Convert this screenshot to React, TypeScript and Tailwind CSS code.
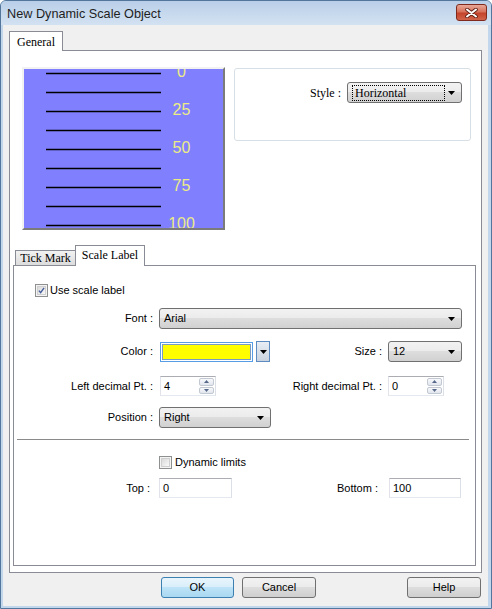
import React from 'react';

function DownArrow() {
    return (
        <svg width="7" height="4" viewBox="0 0 7 4">
            <path d="M0 0H7L3.5 4Z" fill="#000" />
        </svg>
    );
}

function Combo({ text, className, serif }: { text: string; className: string; serif?: boolean }) {
    return (
        <div
            className={`flex h-[21px] items-center justify-between rounded-[3px] border border-[#707070] bg-[linear-gradient(#f2f2f2_0%,#ebebeb_50%,#dddddd_50%,#d1d1d1_100%)] pr-[6px] pl-[4px] ${className}`}
        >
            {serif ? (
                <span className="flex h-[16px] w-[93px] items-center border border-dotted border-black pl-[2px] font-['Liberation_Serif',serif] text-[12px]">
                    {text}
                </span>
            ) : (
                <span className="text-[11px]">{text}</span>
            )}
            <DownArrow />
        </div>
    );
}

function SpinBtn({ up }: { up?: boolean }) {
    return (
        <div className="flex flex-1 items-center justify-center rounded-[2px] border border-[#c3c9d3] bg-[linear-gradient(#f8f9fb,#e1e6ee)]">
            <svg width="5" height="3" viewBox="0 0 5 3">
                <path d={up ? 'M0 3H5L2.5 0Z' : 'M0 0H5L2.5 3Z'} fill="#56698a" />
            </svg>
        </div>
    );
}

function Spin({ value, className }: { value: string; className: string }) {
    return (
        <div className={`flex h-[20px] border border-t-[#abadb3] border-r-[#dbdfe6] border-b-[#e3e9ef] border-l-[#e2e3ea] bg-white ${className}`}>
            <span className="flex flex-1 items-center pl-[3px] text-[11px]">{value}</span>
            <div className="flex w-[16px] flex-col gap-px py-px pr-px">
                <SpinBtn up />
                <SpinBtn />
            </div>
        </div>
    );
}

function TextBox({ value, className }: { value: string; className: string }) {
    return (
        <div
            className={`flex h-[20px] items-center border border-t-[#abadb3] border-r-[#dbdfe6] border-b-[#e3e9ef] border-l-[#e2e3ea] bg-white pl-[3px] text-[11px] ${className}`}
        >
            {value}
        </div>
    );
}

function Check({ checked }: { checked?: boolean }) {
    return (
        <div className="flex h-[13px] w-[13px] shrink-0 border border-[#8e8f8f] bg-[#f4f4f4] p-px">
            <div className="flex h-full w-full items-center justify-center border border-[#cfcfcf] bg-[linear-gradient(135deg,#d9d9d9,#f9f9f9)]">
                {checked && (
                    <svg width="9" height="9" viewBox="0 0 9 9">
                        <path d="M1.2 4.6L3.4 7.2L7.8 1" fill="none" stroke="#41599a" strokeWidth="1.7" />
                    </svg>
                )}
            </div>
        </div>
    );
}

function Label({ children, className }: { children: React.ReactNode; className: string }) {
    return <div className={`shrink-0 text-right text-[11px] ${className}`}>{children}</div>;
}

function Btn({ children, primary, className }: { children: React.ReactNode; primary?: boolean; className: string }) {
    return (
        <div
            className={`flex h-[21px] items-center justify-center rounded-[3px] border text-[11px] ${
                primary
                    ? 'border-[#3c7fb1] bg-[linear-gradient(#e9f5fc_0%,#d8eefa_50%,#bde3f7_50%,#a9d8f1_100%)]'
                    : 'border-[#707070] bg-[linear-gradient(#f2f2f2_0%,#ebebeb_50%,#dddddd_50%,#cfcfcf_100%)]'
            } ${className}`}
        >
            {children}
        </div>
    );
}

export default function App() {
    const ticks = [4.5, 23.5, 42.5, 61.5, 80.5, 99.5, 118.5, 137.5, 156.5];
    const labels = [
        { y: 8.25, t: '0' },
        { y: 46.25, t: '25' },
        { y: 84.25, t: '50' },
        { y: 122.25, t: '75' },
        { y: 160.25, t: '100' },
    ];

    return (
        <div className="flex h-[609px] w-[492px] flex-col overflow-hidden rounded-t-[6px] border border-[#52769c] bg-[#c2d6ec] font-['Liberation_Sans',Arial,sans-serif] text-black">
            {/* title bar */}
            <div className="flex h-[24px] shrink-0 items-start justify-between bg-[linear-gradient(#b9cfe8,#d3e2f2)] pt-[3px] pr-[4px] pl-[6px]">
                <span className="mt-[3px] text-[12.7px] leading-[14px] text-[#1e1e1e]">New Dynamic Scale Object</span>
                <div className="flex h-[17px] w-[31px] items-center justify-center rounded-[3px] border border-[#7f2a1c] bg-[linear-gradient(#e9a898_0%,#d7715c_45%,#c4442b_55%,#d0644a_100%)]">
                    <svg width="13" height="10" viewBox="0 0 13 10">
                        <path d="M2 1.5L11 8.5M11 1.5L2 8.5" stroke="#5c1d12" strokeWidth="3.6" strokeLinecap="round" />
                        <path d="M2 1.5L11 8.5M11 1.5L2 8.5" stroke="#ffffff" strokeWidth="2" strokeLinecap="round" />
                    </svg>
                </div>
            </div>

            <div className="flex flex-1 flex-col pr-[3px] pb-[2px] pl-[2px]">
                <div className="flex flex-1 flex-col bg-[#f0f0f0] pt-[6px] pl-[6px]">
                    {/* outer tab strip */}
                    <div className="flex h-[20px]">
                        <div className="relative z-10 flex h-[20px] w-[54px] items-center justify-center border border-b-0 border-[#898c95] bg-white font-['Liberation_Serif',serif] text-[12px]">
                            General
                        </div>
                    </div>

                    {/* outer panel */}
                    <div className="-mt-px flex h-[523px] w-[473px] flex-col border border-[#898c95] bg-white pl-[3px]">
                        <div className="mt-[16px] ml-[9px] flex items-start gap-[9px]">
                            <div className="h-[163px] w-[203px] border-2 border-t-[#f2f2f2] border-r-[#7b7b7b] border-b-[#7b7b7b] border-l-[#f2f2f2]">
                                <svg width="199" height="159" viewBox="0 0 199 159" className="block">
                                    <rect width="199" height="159" fill="#8080ff" />
                                    {ticks.map((y) => (
                                        <line key={y} x1="22" x2="137" y1={y} y2={y} stroke="#000" strokeWidth="1.3" />
                                    ))}
                                    {labels.map((l) => (
                                        <text
                                            key={l.t}
                                            x="157.5"
                                            y={l.y}
                                            textAnchor="middle"
                                            fontFamily="Liberation Sans, Arial, sans-serif"
                                            fontSize="16"
                                            fill="#ecec86"
                                        >
                                            {l.t}
                                        </text>
                                    ))}
                                </svg>
                            </div>
                            <div className="mt-px flex h-[73px] w-[237px] justify-end gap-[6px] rounded-[3px] border border-[#d5dfe5] pt-[13px] pr-[8px]">
                                <span className="mt-[2px] font-['Liberation_Serif',serif] text-[12px]">Style :</span>
                                <Combo text="Horizontal" serif className="h-[20px] w-[115px] pl-[1px]" />
                            </div>
                        </div>

                        {/* inner tab strip */}
                        <div className="mt-[15px] flex h-[21px] items-end pl-[2px]">
                            <div className="flex h-[16px] w-[61px] items-center justify-center border border-[#898c95] bg-[linear-gradient(#f2f2f2,#dcdcdc)] pb-px font-['Liberation_Serif',serif] text-[12px]">
                                Tick Mark
                            </div>
                            <div className="relative z-10 -ml-px flex h-[21px] w-[70px] items-center justify-center border border-b-0 border-[#898c95] bg-white pb-[3px] font-['Liberation_Serif',serif] text-[12px]">
                                Scale Label
                            </div>
                        </div>

                        {/* inner panel */}
                        <div className="-mt-px flex h-[301px] w-[463px] flex-col border border-[#898c95] bg-white">
                            <div className="mt-[18px] ml-[21px] flex h-[13px] items-center gap-[2px]">
                                <Check checked />
                                <span className="text-[11px]">Use scale label</span>
                            </div>

                            <div className="mt-[11px] flex h-[21px] items-center">
                                <Label className="w-[139px]">Font :</Label>
                                <Combo text="Arial" className="ml-[6px] w-[303px]" />
                            </div>

                            <div className="mt-[12px] flex h-[21px] items-center">
                                <Label className="w-[139px]">Color :</Label>
                                <div className="ml-[7px] h-[20px] w-[93px] border border-[#569de5] p-px">
                                    <div className="h-full w-full border border-[#7a9cc2] bg-[#ffff00]" />
                                </div>
                                <div className="ml-[3px] flex h-[21px] w-[14px] items-center justify-center border border-[#5b8bc0] bg-[linear-gradient(#e9eef4,#c9d3df)]">
                                    <DownArrow />
                                </div>
                                <Label className="w-[112px]">Size :</Label>
                                <Combo text="12" className="ml-[6px] w-[74px]" />
                            </div>

                            <div className="mt-[14px] flex h-[20px] items-center">
                                <Label className="w-[139px]">Left decimal Pt. :</Label>
                                <Spin value="4" className="ml-[7px] w-[56px]" />
                                <Label className="w-[166px]">Right decimal Pt. :</Label>
                                <Spin value="0" className="ml-[6px] w-[56px]" />
                            </div>

                            <div className="mt-[11px] flex h-[21px] items-center">
                                <Label className="w-[139px]">Position :</Label>
                                <Combo text="Right" className="ml-[6px] w-[112px]" />
                            </div>

                            <div className="mt-[11px] ml-[3px] h-[2px] w-[452px] border-t border-b border-t-[#8a8a8a] border-b-white" />

                            <div className="mt-[15px] ml-[145px] flex h-[13px] items-center gap-[3px]">
                                <Check />
                                <span className="text-[11px]">Dynamic limits</span>
                            </div>

                            <div className="mt-[9px] flex h-[20px] items-center">
                                <Label className="w-[139px] pr-[3px]">Top :</Label>
                                <TextBox value="0" className="ml-[6px] w-[73px]" />
                                <Label className="w-[146px]">Bottom :</Label>
                                <TextBox value="100" className="ml-[11px] w-[72px]" />
                            </div>
                        </div>
                    </div>

                    {/* buttons */}
                    <div className="mt-[4px] flex h-[21px] items-center pl-[152px]">
                        <Btn primary className="w-[73px]">
                            OK
                        </Btn>
                        <Btn className="ml-[8px] w-[74px]">Cancel</Btn>
                        <Btn className="ml-[91px] w-[74px]">Help</Btn>
                    </div>
                </div>
            </div>
        </div>
    );
}
